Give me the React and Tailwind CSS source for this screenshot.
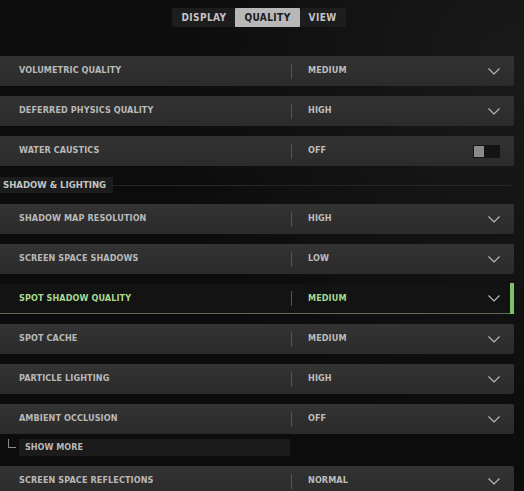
const FONT = { fontFamily: '"DejaVu Sans Condensed", "Liberation Sans Narrow", "Liberation Sans", sans-serif' };

const TABS = ["DISPLAY", "QUALITY", "VIEW"];

function Chevron() {
  return (
    <svg width="12" height="7" viewBox="0 0 12 7" className="shrink-0">
      <polyline points="0.5,0.5 6,6 11.5,0.5" fill="none" stroke="#bdbdbd" strokeWidth="1.1" />
    </svg>
  );
}

function Toggle() {
  return (
    <div className="w-[27px] h-[13px] bg-[#141414] flex items-center p-[1px]">
      <div className="w-[10px] h-[11px] bg-[#8a8a8a]" />
    </div>
  );
}

function Row({ label, value, toggle, active }) {
  return (
    <div
      className={`relative h-[30px] w-[514px] shrink-0 flex items-center rounded-r-[2px] ${
        active
          ? "bg-[#131313] border-b border-[#5d6b58]"
          : "bg-gradient-to-b from-[#333333] to-[#2b2b2b]"
      }`}
    >
      <div
        className={`w-[291px] pl-[19px] text-[9px] font-bold tracking-[0.1px] ${
          active ? "text-[#a7d98f]" : "text-[#b9b9b9]"
        }`}
      >
        {label}
      </div>
      <div className="w-px h-[15px] bg-[#555555]" />
      <div
        className={`flex-1 pl-[16px] text-[9px] font-bold tracking-[0.1px] ${
          active ? "text-[#a7d98f]" : "text-[#bdbdbd]"
        }`}
      >
        {value}
      </div>
      <div className="w-[60px] pr-[14px] flex items-center justify-end">
        {toggle ? <Toggle /> : <Chevron />}
      </div>
      {active && <div className="absolute right-0 top-[-1px] bottom-[-1px] w-[4px] bg-[#7dc168]" />}
    </div>
  );
}

export default function App() {
  return (
    <div
      className="w-[524px] h-[491px] overflow-hidden bg-[#0c0c0c] bg-[radial-gradient(circle_at_100%_15%,#1a1a1a,#0c0c0c_55%)] flex flex-col"
      style={FONT}
    >
      <div className="pt-[8px] flex justify-center">
        <div className="flex ml-[-6px] bg-[#1d1d1d] h-[19px] rounded-[1px]">
          {TABS.map((t) => (
            <div
              key={t}
              className={`px-[9px] flex items-center text-[10px] font-bold tracking-[0.4px] ${
                t === "QUALITY" ? "bg-[#b8b8b8] text-[#1a1a1a] rounded-[1px]" : "text-[#c4c4c4]"
              }`}
            >
              {t}
            </div>
          ))}
        </div>
      </div>

      <div className="mt-[29px] flex flex-col gap-[10px]">
        <Row label="VOLUMETRIC QUALITY" value="MEDIUM" />
        <Row label="DEFERRED PHYSICS QUALITY" value="HIGH" />
        <Row label="WATER CAUSTICS" value="OFF" toggle />
      </div>

      <div className="mt-[11px] flex items-center w-[512px]">
        <div className="h-[16px] pl-[3px] pr-[7px] bg-[#1c1c1c] flex items-center text-[9.5px] font-bold text-[#c4c4c4]">
          SHADOW &amp; LIGHTING
        </div>
        <div className="flex-1 h-px bg-[#262626]" />
      </div>

      <div className="mt-[11px] flex flex-col gap-[10px]">
        <Row label="SHADOW MAP RESOLUTION" value="HIGH" />
        <Row label="SCREEN SPACE SHADOWS" value="LOW" />
        <Row label="SPOT SHADOW QUALITY" value="MEDIUM" active />
        <Row label="SPOT CACHE" value="MEDIUM" />
        <Row label="PARTICLE LIGHTING" value="HIGH" />
        <Row label="AMBIENT OCCLUSION" value="OFF" />
      </div>

      <div className="mt-[5px] flex items-start h-[17px]">
        <div className="ml-[8px] w-[8px] h-[9px] border-l border-b border-[#8a8a8a]" />
        <div className="ml-[3px] w-[271px] h-[17px] bg-[#1b1b1b] flex items-center pl-[6px] text-[9px] font-bold text-[#b9b9b9]">
          SHOW MORE
        </div>
      </div>

      <div className="mt-[10px] flex flex-col">
        <Row label="SCREEN SPACE REFLECTIONS" value="NORMAL" />
      </div>
    </div>
  );
}
